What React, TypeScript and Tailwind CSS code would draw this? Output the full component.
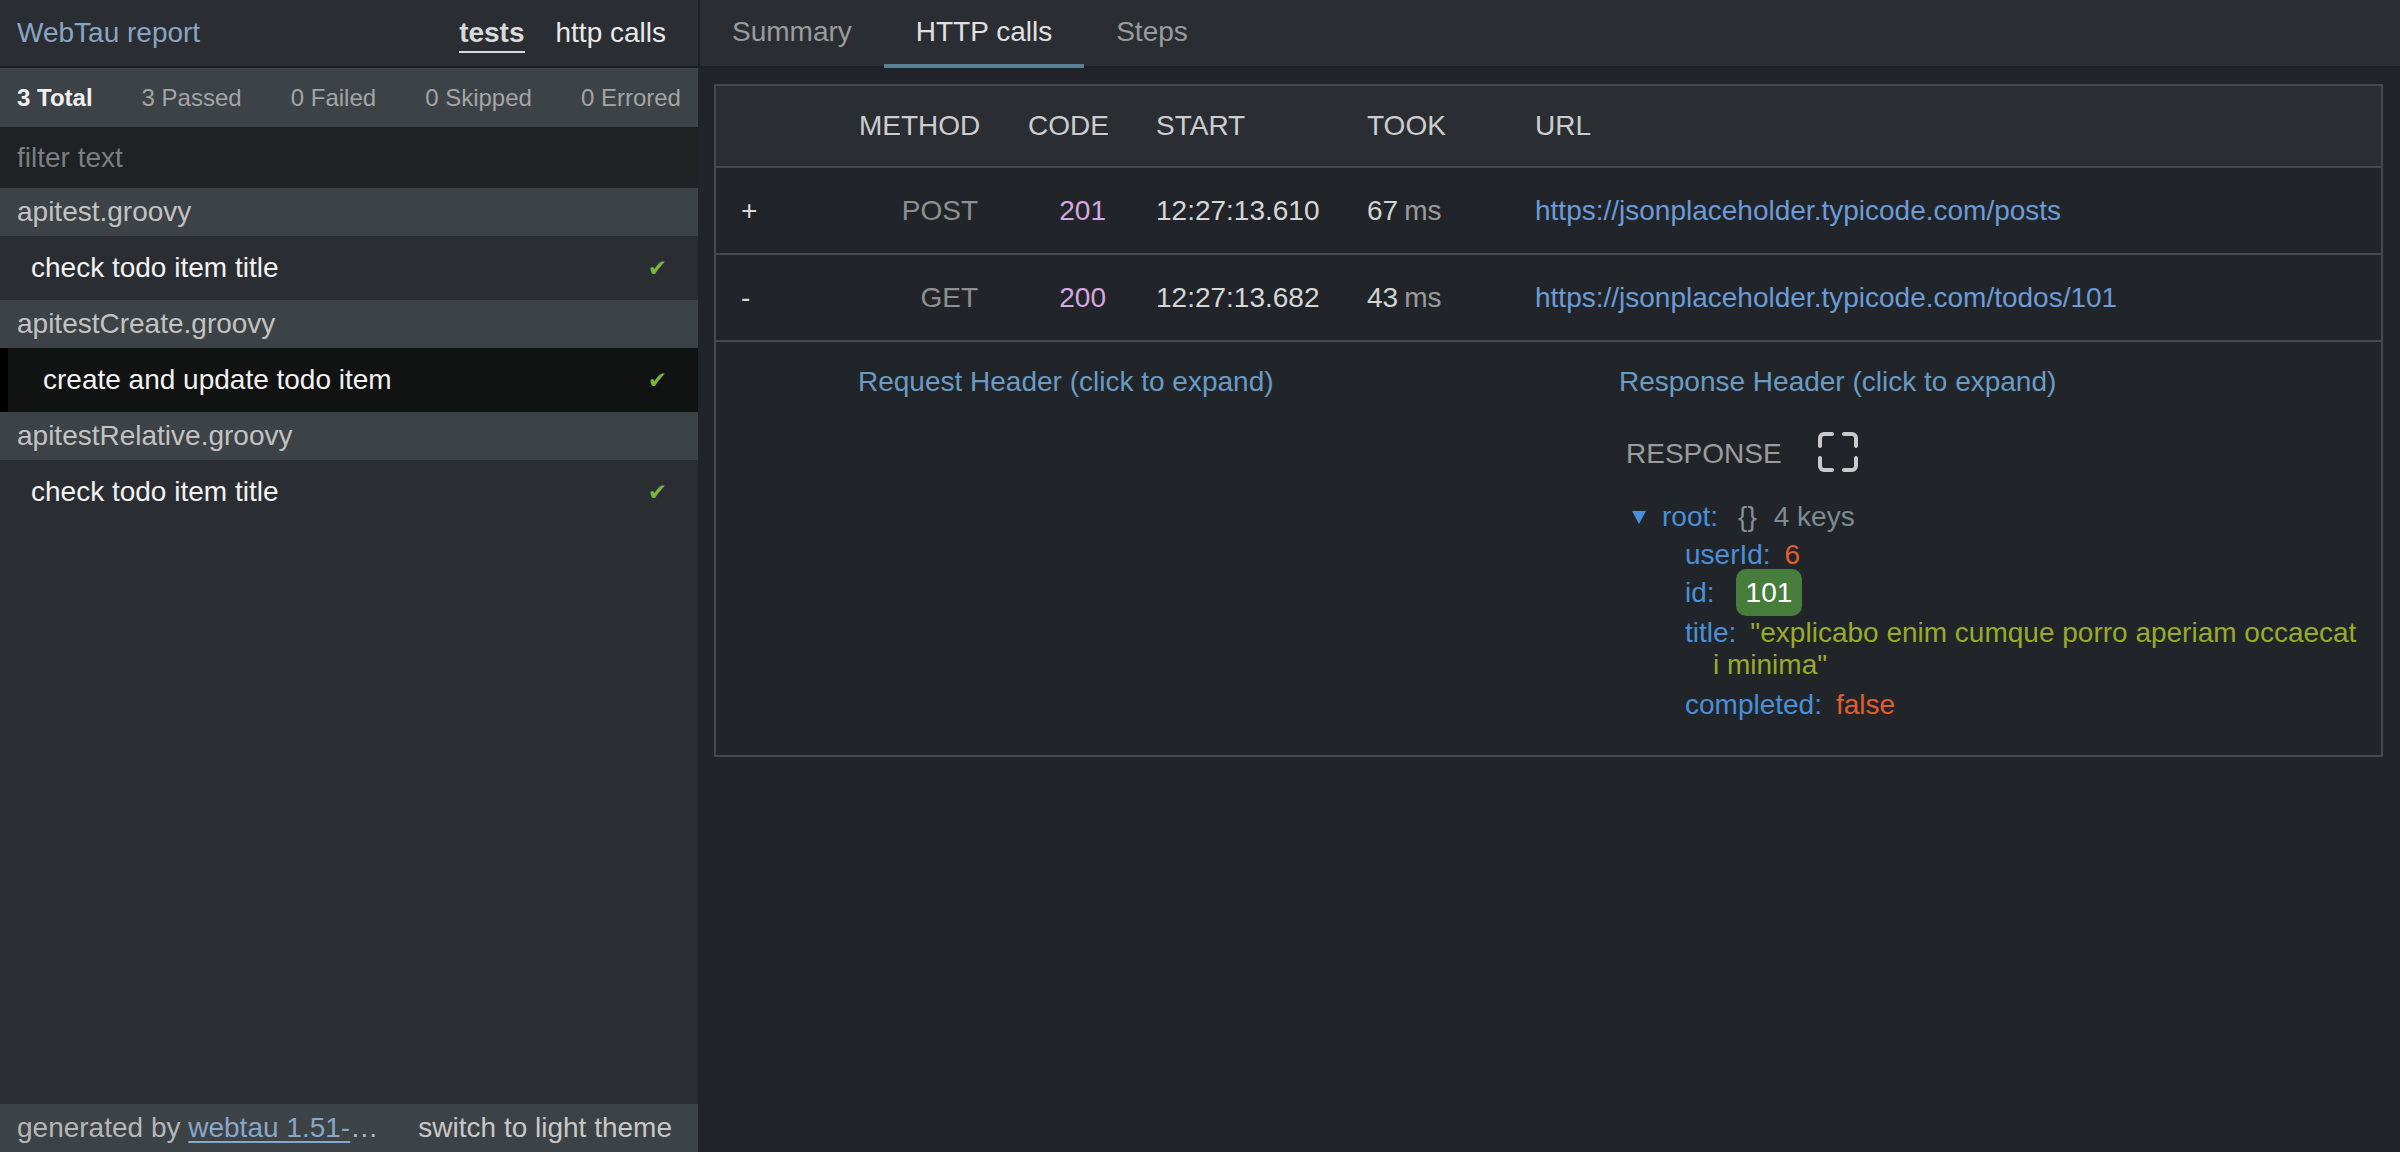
import React from 'react';

type Test = { name: string; selected?: boolean };
type Group = { file: string; tests: Test[] };

const groups: Group[] = [
  { file: 'apitest.groovy', tests: [{ name: 'check todo item title' }] },
  { file: 'apitestCreate.groovy', tests: [{ name: 'create and update todo item', selected: true }] },
  { file: 'apitestRelative.groovy', tests: [{ name: 'check todo item title' }] },
];

const calls = [
  { toggle: '+', method: 'POST', code: '201', start: '12:27:13.610', took: '67', url: 'https://jsonplaceholder.typicode.com/posts' },
  { toggle: '-', method: 'GET', code: '200', start: '12:27:13.682', took: '43', url: 'https://jsonplaceholder.typicode.com/todos/101' },
];

const cols = 'grid grid-cols-[118px_169px_128px_211px_168px_1fr] items-center';

function ExpandIcon() {
  return (
    <svg width="40" height="40" viewBox="0 0 40 40" fill="none" stroke="#c9c9c9" strokeWidth="4" strokeLinecap="round" strokeLinejoin="round">
      <path d="M2 14V6a4 4 0 0 1 4-4h8" />
      <path d="M26 2h8a4 4 0 0 1 4 4v8" />
      <path d="M2 26v8a4 4 0 0 0 4 4h8" />
      <path d="M26 38h8a4 4 0 0 0 4-4v-8" />
    </svg>
  );
}

function Sidebar() {
  return (
    <div className="w-[698px] h-full flex flex-col bg-[#2a2e32] shrink-0">
      {/* header */}
      <div className="h-[68px] flex items-center justify-between pl-[17px] pr-[32px] bg-[#2a2e33] border-b-2 border-[#1e2124]">
        <span className="text-[#8aa4c4] text-[28px] leading-[32px]">WebTau report</span>
        <div className="flex items-center gap-[31px] text-[28px]">
          <span className="font-bold text-[#d9d9d9] leading-[32px] border-b-2 border-[#d9d9d9] pb-[2px] mt-[4px]">tests</span>
          <span className="text-[#e8e8e8] leading-[32px]">http calls</span>
        </div>
      </div>

      {/* stats */}
      <div className="h-[59px] flex items-center justify-between px-[17px] bg-[#3d4247] text-[24px]">
        <span className="font-bold text-[#f0f0f0]">3 Total</span>
        <span className="text-[#a4a4a4]">3 Passed</span>
        <span className="text-[#a4a4a4]">0 Failed</span>
        <span className="text-[#a4a4a4]">0 Skipped</span>
        <span className="text-[#a4a4a4]">0 Errored</span>
      </div>

      {/* filter */}
      <input
        placeholder="filter text"
        className="h-[61px] w-full px-[17px] bg-[#1f2225] text-[28px] text-[#e0e0e0] placeholder:text-[#7b7f83] outline-none"
      />

      {/* tests */}
      <div className="flex-1">
        {groups.map(g => (
          <div key={g.file}>
            <div className="h-[48px] flex items-center pl-[17px] bg-[#3d4247] text-[#c2c2c2] text-[28px]">{g.file}</div>
            {g.tests.map(t => (
              <div
                key={t.name}
                className={`h-[64px] flex items-center justify-between pr-[31px] text-[28px] text-[#f2f2f2] ${
                  t.selected ? 'bg-[#111212] border-l-[8px] border-black pl-[35px]' : 'pl-[31px]'
                }`}
              >
                <span>{t.name}</span>
                <span className="text-[#7cb342] text-[23px] leading-none font-['DejaVu_Sans',sans-serif]">✔</span>
              </div>
            ))}
          </div>
        ))}
      </div>

      {/* footer */}
      <div className="h-[48px] flex items-center justify-between pl-[17px] pr-[26px] bg-[#3d4247] text-[28px]">
        <span className="text-[#b6b6b6] whitespace-nowrap">
          generated by <span className="text-[#8aa6c6] underline underline-offset-[4px]">webtau 1.51-</span>…
        </span>
        <span className="text-[#c8c8c8]">switch to light theme</span>
      </div>
    </div>
  );
}

function JsonTree() {
  return (
    <div className="pl-[13px] text-[28px] leading-[32px]">
      <div className="flex items-center">
        <svg width="14" height="13" viewBox="0 0 14 13" className="mr-[16px]">
          <polygon points="0,0 14,0 7,13" fill="#4a8fd8" />
        </svg>
        <span className="text-[#4a8fd8]">root:</span>
        <span className="text-[#858e96] ml-[20px]">{'{}'}</span>
        <span className="text-[#7f8a93] ml-[17px]">4 keys</span>
      </div>
      <div className="ml-[53px]">
        <div className="mt-[6px]">
          <span className="text-[#4a8fd8] mr-[14px]">userId:</span>
          <span className="text-[#e05d2c]">6</span>
        </div>
        <div className="mt-[6px]">
          <span className="text-[#4a8fd8] mr-[14px]">id:</span>
          <span className="ml-[7px] px-[10px] py-[8px] rounded-[10px] bg-[#467d3b] text-white">101</span>
        </div>
        <div className="mt-[8px] pl-7 -indent-7 whitespace-nowrap">
          <span className="text-[#4a8fd8] mr-[14px]">title:</span>
          <span className="text-[#9aaa2a]">
            "explicabo enim cumque porro aperiam occaecat
            <br />
            i minima"
          </span>
        </div>
        <div className="mt-[8px]">
          <span className="text-[#4a8fd8] mr-[14px]">completed:</span>
          <span className="text-[#e05d2c]">false</span>
        </div>
      </div>
    </div>
  );
}

function HttpCalls() {
  return (
    <div className="border-2 border-[#45494e] text-[28px]">
      <div className={`${cols} h-[82px] bg-[#2a2e33] text-[#cdcdcd] border-b-2 border-[#45494e]`}>
        <div />
        <div className="px-[25px] text-right">METHOD</div>
        <div className="px-[25px] text-right">CODE</div>
        <div className="px-[25px]">START</div>
        <div className="px-[25px]">TOOK</div>
        <div className="px-[25px]">URL</div>
      </div>
      {calls.map(c => (
        <div key={c.start} className={`${cols} h-[87px] border-b-2 border-[#45494e]`}>
          <div className="px-[25px] text-[#dadada]">{c.toggle}</div>
          <div className="px-[25px] text-right text-[#8f8f8f]">{c.method}</div>
          <div className="px-[25px] text-right text-[#d6a7e2]">{c.code}</div>
          <div className="px-[25px] text-[#d6d6d6]">{c.start}</div>
          <div className="px-[25px]">
            <span className="text-[#d2d2d2]">{c.took}</span>
            <span className="text-[#9b9b9b] ml-[6px]">ms</span>
          </div>
          <div className="px-[25px] text-[#6b9bd8]">{c.url}</div>
        </div>
      ))}
      <div className="h-[413px] grid grid-cols-[761px_1fr] pl-[142px] pt-[24px]">
        <div>
          <div className="text-[#6a9bc4] leading-[32px]">Request Header (click to expand)</div>
        </div>
        <div>
          <div className="text-[#6a9bc4] leading-[32px]">Response Header (click to expand)</div>
          <div className="mt-[34px] h-[40px] flex items-center pl-[7px] gap-[36px]">
            <span className="text-[#9c9c9c] pt-[3px]">RESPONSE</span>
            <ExpandIcon />
          </div>
          <div className="mt-[29px]">
            <JsonTree />
          </div>
        </div>
      </div>
    </div>
  );
}

export default function App() {
  return (
    <div className="w-[2400px] h-[1152px] flex overflow-hidden bg-[#212529] font-['Liberation_Sans',Arial,Helvetica,sans-serif]">
      <Sidebar />
      <div className="flex-1 flex flex-col">
        {/* tabs */}
        <div className="h-[68px] flex items-stretch bg-[#2a2e33] border-l-2 border-b-2 border-[#1e2124] text-[28px]">
          <div className="h-[68px] -mb-[2px] px-[32px] flex items-center border-b-4 border-transparent text-[#9b9b9b]">Summary</div>
          <div className="h-[68px] -mb-[2px] px-[32px] flex items-center border-b-4 border-[#5a8196] text-[#e0e0e0]">HTTP calls</div>
          <div className="h-[68px] -mb-[2px] px-[32px] flex items-center border-b-4 border-transparent text-[#9b9b9b]">Steps</div>
        </div>
        <div className="pt-[16px] pl-[16px] pr-[17px]">
          <HttpCalls />
        </div>
      </div>
    </div>
  );
}
